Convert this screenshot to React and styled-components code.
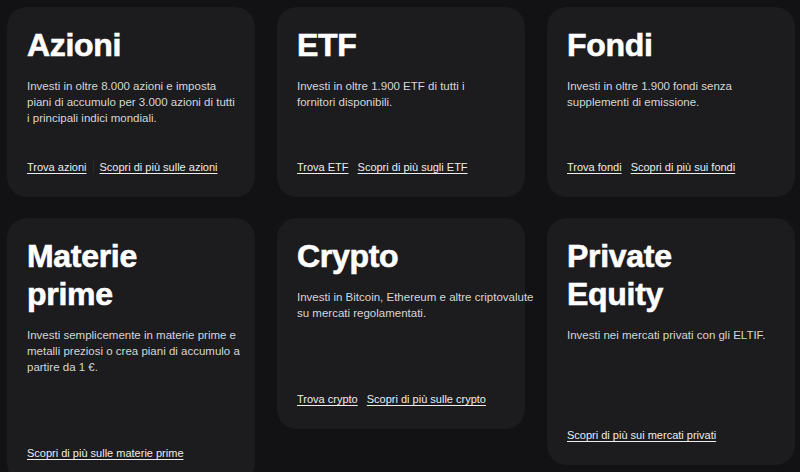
import styled, { createGlobalStyle } from 'styled-components';

const GlobalStyle = createGlobalStyle`
    html, body {
        margin: 0;
        padding: 0;
        background: #121214;
        overflow: hidden;
    }
    body {
        font-family: "Liberation Sans", Arial, sans-serif;
        -webkit-font-smoothing: antialiased;
    }
`

// lines are kept as in the original layout
const products = [
    {
        title: ['Azioni'],
        text: [
            'Investi in oltre 8.000 azioni e imposta',
            'piani di accumulo per 3.000 azioni di tutti',
            'i principali indici mondiali.',
        ],
        links: ['Trova azioni', 'Scopri di più sulle azioni'],
        divider: true,
        height: 190,
    },
    {
        title: ['ETF'],
        text: ['Investi in oltre 1.900 ETF di tutti i', 'fornitori disponibili.'],
        links: ['Trova ETF', 'Scopri di più sugli ETF'],
        height: 190,
    },
    {
        title: ['Fondi'],
        text: ['Investi in oltre 1.900 fondi senza', 'supplementi di emissione.'],
        links: ['Trova fondi', 'Scopri di più sui fondi'],
        height: 190,
    },
    {
        title: ['Materie', 'prime'],
        text: [
            'Investi semplicemente in materie prime e',
            'metalli preziosi o crea piani di accumulo a',
            'partire da 1 €.',
        ],
        links: ['Scopri di più sulle materie prime'],
        height: 265,
    },
    {
        title: ['Crypto'],
        text: ['Investi in Bitcoin, Ethereum e altre criptovalute', 'su mercati regolamentati.'],
        links: ['Trova crypto', 'Scopri di più sulle crypto'],
        height: 211,
    },
    {
        title: ['Private', 'Equity'],
        text: ['Investi nei mercati privati con gli ELTIF.'],
        links: ['Scopri di più sui mercati privati'],
        height: 247,
    },
];

function App() {
    return <Page>
        <GlobalStyle />
        <Grid>
            {products.map((p) => (
                <Card key={p.title.join(' ')} $h={p.height}>
                    <Title>
                        {p.title.map((t) => <Line key={t}>{t}</Line>)}
                    </Title>
                    <Text>
                        {p.text.map((t) => <Line key={t}>{t}</Line>)}
                    </Text>
                    <Links>
                        {p.links.map((l, i) => (
                            <LinkItem key={l} $divider={i > 0 && p.divider}>
                                <a href="#">{l}</a>
                            </LinkItem>
                        ))}
                    </Links>
                </Card>
            ))}
        </Grid>
    </Page>
}
export default App;

const Page = styled.div`
    padding: 7px 5px 0 7px;
    height: 472px;
    box-sizing: border-box;
`

const Grid = styled.div`
    display: grid;
    grid-template-columns: repeat(3, 248px);
    column-gap: 22px;
    row-gap: 21px;
    align-items: start;
`

const Card = styled.div`
    height: ${(p) => p.$h}px;
    box-sizing: border-box;
    padding: 19px 20px 22px;
    background: #1c1c1e;
    border-radius: 20px;
    display: flex;
    flex-direction: column;
`

const Line = styled.span`
    display: block;
    white-space: nowrap;
`

const Title = styled.h2`
    margin: 0;
    font-size: 32px;
    line-height: 38px;
    font-weight: 700;
    color: #ffffff;
    letter-spacing: -0.3px;
    -webkit-text-stroke: 0.6px #ffffff;
`

const Text = styled.p`
    margin: 14px 0 0;
    font-size: 11.5px;
    line-height: 16px;
    color: #d6d6d8;
`

const Links = styled.div`
    margin-top: auto;
    display: flex;
    align-items: center;
    gap: 9px;
`

const LinkItem = styled.span`
    position: relative;
    font-size: 11px;
    line-height: 16px;
    white-space: nowrap;

    a {
        color: #ececec;
        text-decoration: underline;
        text-underline-offset: 2px;
        text-decoration-thickness: 1px;
    }

    ${(p) => p.$divider && `
        margin-left: 4px;

        &::before {
            content: '';
            position: absolute;
            left: -7px;
            top: 2px;
            bottom: 2px;
            width: 1px;
            background: #2a2a2c;
        }
    `}
`
